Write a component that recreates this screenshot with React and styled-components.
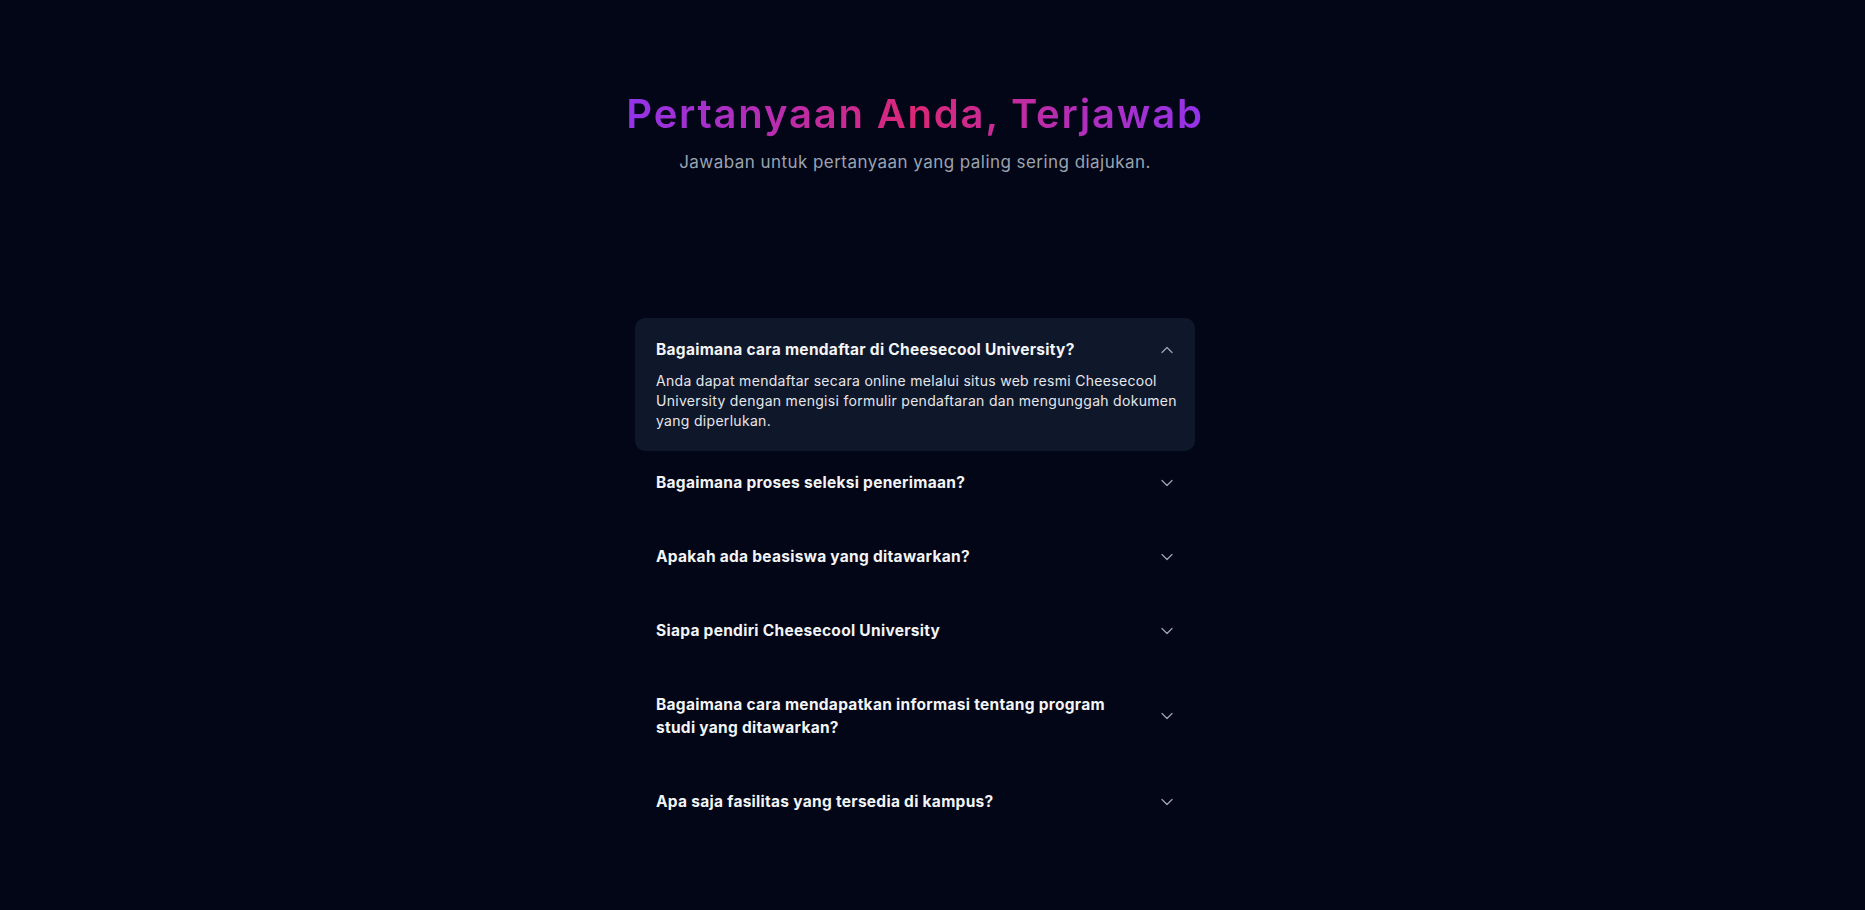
import React, { useState } from "react";
import styled, { createGlobalStyle } from "styled-components";
import { ChevronDown, ChevronUp } from "lucide-react";

const GlobalStyle = createGlobalStyle`
  html, body {
    margin: 0;
    padding: 0;
    background: #020617;
  }
  body {
    font-family: Inter, "Open Sans", "Liberation Sans", sans-serif;
    -webkit-font-smoothing: antialiased;
  }
  * { box-sizing: border-box; }
`;

const Page = styled.main`
  min-height: 100vh;
  background: #020617;
  padding: 86px 35px 60px 0;
`;

const Header = styled.header`
  text-align: center;
`;

const Title = styled.h2`
  margin: 0;
  font-size: 40px;
  line-height: 56px;
  font-weight: 600;
  letter-spacing: 1.8px;
  background: linear-gradient(to right, #9333ea, #db2777, #9333ea);
  -webkit-background-clip: text;
  background-clip: text;
  color: transparent;
  display: inline-block;
`;

const Subtitle = styled.p`
  margin: 6px 0 0;
  font-size: 17px;
  line-height: 28px;
  letter-spacing: 0.45px;
  color: #9ca3af;
  font-weight: 400;
`;

const List = styled.div`
  width: 560px;
  margin: 142px auto 0;
  display: flex;
  flex-direction: column;
`;

const Item = styled.div`
  border-radius: 10px;
  background: ${(p) => (p.$open ? "#0f172a" : "transparent")};
  padding: 20px 18px ${(p) => (p.$open ? "20px" : "31px")} 21px;
`;

const Question = styled.button`
  all: unset;
  cursor: pointer;
  width: 100%;
  display: flex;
  align-items: center;
  justify-content: space-between;
  gap: 16px;
`;

const QuestionText = styled.span`
  font-size: 15.5px;
  line-height: 23px;
  font-weight: 700;
  letter-spacing: 0.28px;
  color: #f3f4f6;
  text-align: left;
`;

const IconWrap = styled.span`
  flex: 0 0 20px;
  display: flex;
  color: #9ca3af;
`;

const Answer = styled.p`
  margin: 10px 0 0;
  font-size: 14px;
  line-height: 20px;
  letter-spacing: 0.3px;
  color: #e5e7eb;
`;

const faqs = [
  {
    q: "Bagaimana cara mendaftar di Cheesecool University?",
    a: "Anda dapat mendaftar secara online melalui situs web resmi Cheesecool University dengan mengisi formulir pendaftaran dan mengunggah dokumen yang diperlukan.",
  },
  {
    q: "Bagaimana proses seleksi penerimaan?",
    a: "Proses seleksi meliputi penilaian dokumen akademik, tes tertulis, dan wawancara.",
  },
  {
    q: "Apakah ada beasiswa yang ditawarkan?",
    a: "Ya, tersedia beasiswa prestasi akademik dan beasiswa bantuan biaya pendidikan.",
  },
  {
    q: "Siapa pendiri Cheesecool University",
    a: "Cheesecool University didirikan oleh sekelompok pendidik yang berdedikasi.",
  },
  {
    q: "Bagaimana cara mendapatkan informasi tentang program studi yang ditawarkan?",
    a: "Informasi lengkap tersedia di situs web resmi serta melalui kantor admisi.",
  },
  {
    q: "Apa saja fasilitas yang tersedia di kampus?",
    a: "Kampus dilengkapi perpustakaan, laboratorium, asrama, dan fasilitas olahraga.",
  },
];

export default function App() {
  const [open, setOpen] = useState(0);
  return (
    <>
      <GlobalStyle />
      <Page>
        <Header>
          <Title>Pertanyaan Anda, Terjawab</Title>
          <Subtitle>Jawaban untuk pertanyaan yang paling sering diajukan.</Subtitle>
        </Header>
        <List>
          {faqs.map((f, i) => {
            const isOpen = open === i;
            return (
              <Item key={i} $open={isOpen}>
                <Question onClick={() => setOpen(isOpen ? -1 : i)}>
                  <QuestionText>{f.q}</QuestionText>
                  <IconWrap>
                    {isOpen ? (
                      <ChevronUp size={20} strokeWidth={1.5} />
                    ) : (
                      <ChevronDown size={20} strokeWidth={1.5} />
                    )}
                  </IconWrap>
                </Question>
                {isOpen && <Answer>{f.a}</Answer>}
              </Item>
            );
          })}
        </List>
      </Page>
    </>
  );
}
